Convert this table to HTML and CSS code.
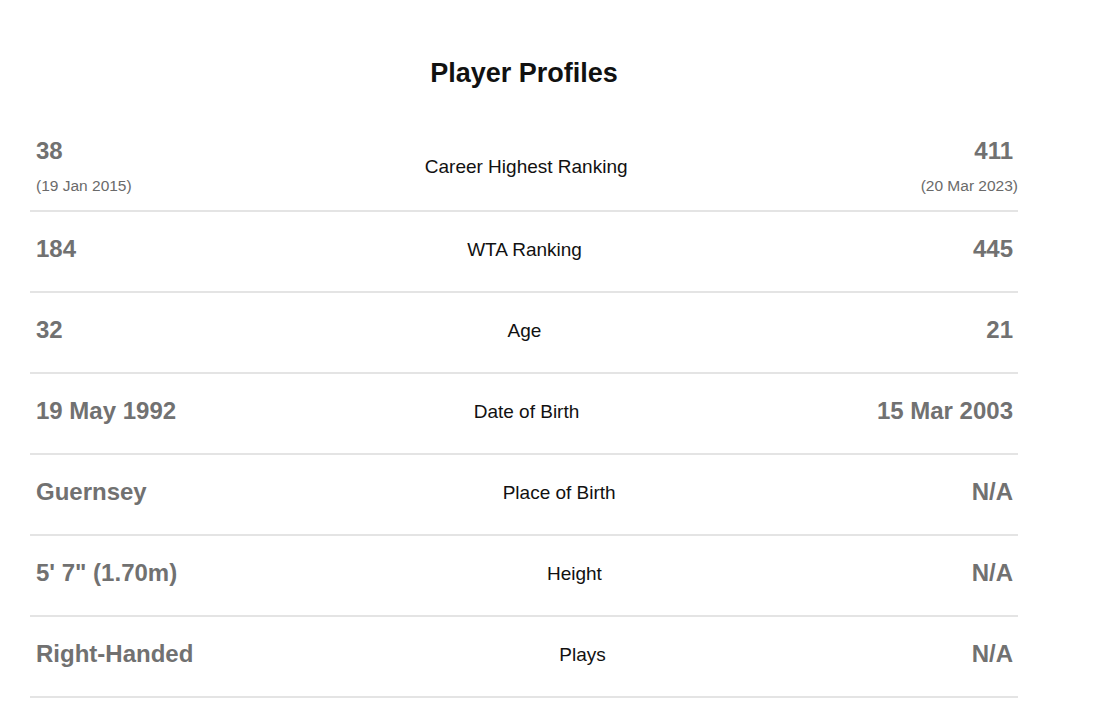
FILE: index.html
```html
<!DOCTYPE html>
<html lang="en">
<head>
<meta charset="utf-8">
<title>Player Profiles</title>
<link rel="stylesheet" href="styles.css">
</head>
<body>
<section class="profiles">
  <h2 class="title">Player Profiles</h2>
  <div class="table">
    <div class="row row-first">
      <div class="side side-left"><div class="val">38</div><div class="sub">(19 Jan 2015)</div></div>
      <div class="label">Career Highest Ranking</div>
      <div class="side side-right"><div class="val">411</div><div class="sub">(20 Mar 2023)</div></div>
    </div>
    <div class="row">
      <div class="side side-left"><div class="val">184</div></div>
      <div class="label">WTA Ranking</div>
      <div class="side side-right"><div class="val">445</div></div>
    </div>
    <div class="row">
      <div class="side side-left"><div class="val">32</div></div>
      <div class="label">Age</div>
      <div class="side side-right"><div class="val">21</div></div>
    </div>
    <div class="row">
      <div class="side side-left"><div class="val">19 May 1992</div></div>
      <div class="label">Date of Birth</div>
      <div class="side side-right"><div class="val">15 Mar 2003</div></div>
    </div>
    <div class="row">
      <div class="side side-left"><div class="val">Guernsey</div></div>
      <div class="label">Place of Birth</div>
      <div class="side side-right"><div class="val">N/A</div></div>
    </div>
    <div class="row">
      <div class="side side-left"><div class="val">5' 7" (1.70m)</div></div>
      <div class="label">Height</div>
      <div class="side side-right"><div class="val">N/A</div></div>
    </div>
    <div class="row">
      <div class="side side-left"><div class="val">Right-Handed</div></div>
      <div class="label">Plays</div>
      <div class="side side-right"><div class="val">N/A</div></div>
    </div>
  </div>
</section>
</body>
</html>
```

FILE: styles.css
```css
html, body {
  margin: 0;
  padding: 0;
  background: #ffffff;
}

body {
  font-family: "Liberation Sans", Arial, Helvetica, sans-serif;
  color: #111111;
}

.profiles {
  width: 988px;
  margin-left: 30px;
  padding-top: 58px;
}

.title {
  margin: 0 0 25px;
  font-size: 27px;
  line-height: 31px;
  font-weight: 700;
  text-align: center;
  color: #111111;
}

.table {
  display: flex;
  flex-direction: column;
}

.row {
  display: flex;
  align-items: center;
  padding: 22px 0 28px;
  border-bottom: 2px solid #e4e4e4;
}

.row-first {
  padding-bottom: 15px;
}

.side {
  flex: 1 1 auto;
  display: flex;
  flex-direction: column;
}

.side-left {
  align-items: flex-start;
  padding-left: 6px;
}

.side-right {
  align-items: flex-end;
}

.side-right .val {
  padding-right: 5px;
}

.val {
  font-size: 24px;
  line-height: 29px;
  font-weight: 700;
  color: #717171;
  white-space: nowrap;
}

.sub {
  margin-top: 12px;
  font-size: 15.5px;
  line-height: 18px;
  color: #6a6a6a;
  white-space: nowrap;
}

.label {
  flex: 1 1 auto;
  padding-top: 3px;
  text-align: center;
  font-size: 19px;
  line-height: 22px;
  color: #111111;
  white-space: nowrap;
}
```
